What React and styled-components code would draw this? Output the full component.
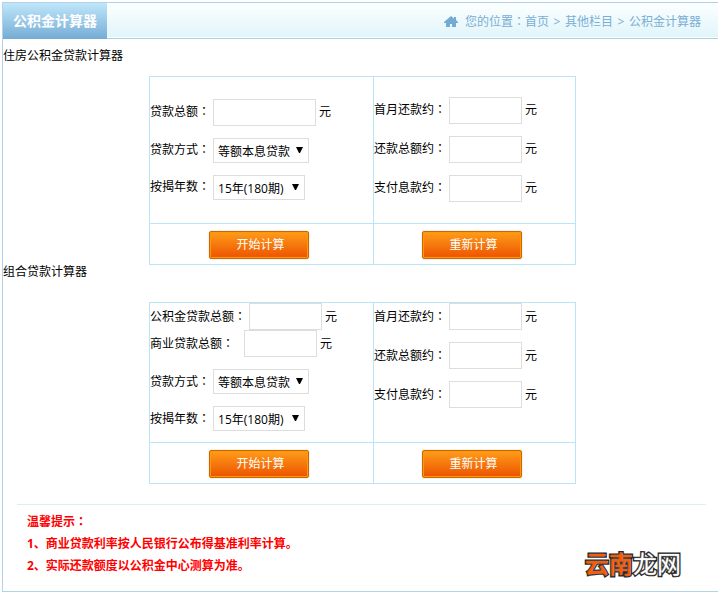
import React, {useId} from 'react';
import styled, {createGlobalStyle} from 'styled-components';

const GlobalStyle = createGlobalStyle`
    * {
        box-sizing: border-box;
    }
    body {
        margin: 0;
        background: #ffffff;
        color: #000000;
        font-family: "Open Sans", "Noto Sans CJK SC", sans-serif;
        font-size: 12px;
        line-height: 14px;
        overflow-x: hidden;
    }
    input, select, button {
        font-family: inherit;
        font-size: 12px;
        margin: 0;
    }
`;

const Frame = styled.div`
    position: relative;
    margin: 2px -5px 0 2px;
    border: 1px solid #b1d3ea;
`;

const Header = styled.header`
    display: flex;
    justify-content: space-between;
    align-items: center;
    height: 36px;
    padding-right: 21px;
    border-bottom: 1px solid #a9cfe8;
    background: linear-gradient(#fdffff, #e0f5fa 34px, #ffffff 34px);
`;

const Tab = styled.h1`
    height: 36px;
    margin: 0 0 -1px;
    padding: 0 10px;
    color: #ffffff;
    font-size: 14px;
    line-height: 36px;
    background: linear-gradient(#bfe6fb, #75acd4);
`;

const Crumbs = styled.nav`
    display: flex;
    align-items: center;
    padding-top: 2px;
    color: #7aaed5;
`;

const CrumbLink = styled.a`
    color: inherit;
    text-decoration: none;
`;

const Separator = styled.span`
    width: 16px;
    text-align: center;
`;

const HomeIcon = styled.svg`
    width: 14px;
    height: 12px;
    margin-right: 7px;
    fill: #74abd4;
`;

const Content = styled.main`
    padding-top: 10px;
`;

const SectionTitle = styled.h2`
    margin: 0 0 ${props => props.$space}px;
    font-size: 12px;
    font-weight: normal;
    line-height: 14px;
`;

const CalcTable = styled.table`
    width: 427px;
    margin: 0 auto;
    table-layout: fixed;
    border-spacing: 0;
    border: solid #b8e5f8;
    border-width: 1px 0 0 1px;
`;

const Cell = styled.td`
    width: ${props => props.$width}px;
    height: ${props => props.$height}px;
    padding: 0 0 2px;
    vertical-align: ${props => props.$align};
    border: solid #b8e5f8;
    border-width: 0 1px 1px 0;
`;

const ButtonCell = styled.td`
    padding: 7px 6px 5px 0;
    text-align: center;
    border: solid #b8e5f8;
    border-width: 0 1px 1px 0;
`;

const Row = styled.div`
    display: flex;
    align-items: center;
    gap: 3px;
    margin-top: ${props => props.$tight ? 0 : 12}px;
    &:first-child {
        margin-top: 0;
    }
`;

const Label = styled.label`
    margin-right: ${props => props.$wide ? 7 : 0}px;
    padding-bottom: 1px;
    white-space: nowrap;
`;

// the colon sits in the middle of its square in the TC family
const Colon = styled.span`
    font-family: "Noto Sans CJK TC", sans-serif;
`;

const TextBox = styled.input`
    width: ${props => props.$long ? 103 : 73}px;
    height: 27px;
    padding: 0 4px;
    border: 1px solid #dddddd;
    background: #ffffff;
`;

const SelectWrap = styled.span`
    position: relative;
    display: flex;
`;

const SelectBox = styled.select`
    width: ${props => props.$width}px;
    height: 25px;
    padding: 2px 18px 0 4px;
    appearance: none;
    color: #000000;
    border: 1px solid #dddddd;
    border-radius: 0;
    background: #ffffff;
`;

const Arrow = styled.svg`
    position: absolute;
    top: 9px;
    right: 6px;
    width: 7px;
    height: 6px;
    pointer-events: none;
`;

const Button = styled.button`
    display: inline-block;
    width: 100px;
    height: 28px;
    padding: 0 0 0 4px;
    vertical-align: top;
    color: #ffffff;
    line-height: 26px;
    border: 1px solid #cc6600;
    border-radius: 2px;
    background: linear-gradient(#ff9c1a, #ec5300);
    box-shadow: inset 0 0 0 1px #ff9900, 0 0 2px #cccccc;
    cursor: pointer;
`;

const Tips = styled.div`
    margin: 20px 16px 0 14px;
    padding: 5px 10px 14px;
    color: #ff0000;
    font-weight: bold;
    line-height: 22px;
    border-top: 1px solid #dbf0f3;
    p {
        margin: 0;
    }
`;

const Logo = styled.div`
    position: absolute;
    right: 41px;
    bottom: 13px;
    color: #ffffff;
    font-size: 24px;
    font-weight: 400;
    line-height: 28px;
    -webkit-text-stroke: 3px #1a1a1a;
    paint-order: stroke fill;
    text-shadow: 0 0 2px #bbbbbb;
    span {
        color: #ff5a00;
        font-weight: 500;
    }
`;

const Field = ({label, long, wide, tight}) => {
    const id = useId();
    return (
        <Row $tight={tight}>
            <Label htmlFor={id} $wide={wide}>{label}<Colon>：</Colon></Label>
            <TextBox id={id} type="text" $long={long}/>
            <span>元</span>
        </Row>
    )
};

const Choice = ({label, width, option}) => {
    const id = useId();
    return (
        <Row>
            <Label htmlFor={id}>{label}<Colon>：</Colon></Label>
            <SelectWrap>
                <SelectBox id={id} $width={width}>
                    <option>{option}</option>
                </SelectBox>
                <Arrow viewBox="0 0 7 6"><path d="M0 0h7L4 6H3z"/></Arrow>
            </SelectWrap>
        </Row>
    )
};

const Calculator = ({children, height, align}) => {
    return (
        <CalcTable>
            <tbody>
                <tr>
                    <Cell $width={224} $height={height} $align={align}>
                        {children}
                        <Choice label="贷款方式" width={96} option="等额本息贷款"/>
                        <Choice label="按揭年数" width={92} option="15年(180期)"/>
                    </Cell>
                    <Cell $width={202} $height={height} $align={align}>
                        <Field label="首月还款约"/>
                        <Field label="还款总额约"/>
                        <Field label="支付息款约"/>
                    </Cell>
                </tr>
                <tr>
                    <ButtonCell><Button type="button">开始计算</Button></ButtonCell>
                    <ButtonCell><Button type="button">重新计算</Button></ButtonCell>
                </tr>
            </tbody>
        </CalcTable>
    )
};

const App = () => {
    return (
        <>
            <GlobalStyle/>
            <Frame>
                <Header>
                    <Tab>公积金计算器</Tab>
                    <Crumbs>
                        <HomeIcon viewBox="0 0 14 12">
                            <path d="M7 0L0 6v1h2v4h4V8h2v3h4V7h2V6l-2-2V1h-2v1.500z"/>
                        </HomeIcon>
                        <span>您的位置<Colon>：</Colon></span>
                        <CrumbLink href="#">首页</CrumbLink>
                        <Separator>&gt;</Separator>
                        <CrumbLink href="#">其他栏目</CrumbLink>
                        <Separator>&gt;</Separator>
                        <CrumbLink href="#">公积金计算器</CrumbLink>
                    </Crumbs>
                </Header>
                <Content>
                    <SectionTitle $space={13}>住房公积金贷款计算器</SectionTitle>
                    <Calculator height={147} align="middle">
                        <Field label="贷款总额" long/>
                    </Calculator>
                    <SectionTitle $space={23}>组合贷款计算器</SectionTitle>
                    <Calculator height={140} align="top">
                        <Field label="公积金贷款总额"/>
                        <Field label="商业贷款总额" wide tight/>
                    </Calculator>
                </Content>
                <Tips>
                    <p>温馨提示<Colon>：</Colon></p>
                    <p>1、商业贷款利率按人民银行公布得基准利率计算。</p>
                    <p>2、实际还款额度以公积金中心测算为准。</p>
                </Tips>
                <Logo><span>云南</span>龙网</Logo>
            </Frame>
        </>
    )
};

export default App;
